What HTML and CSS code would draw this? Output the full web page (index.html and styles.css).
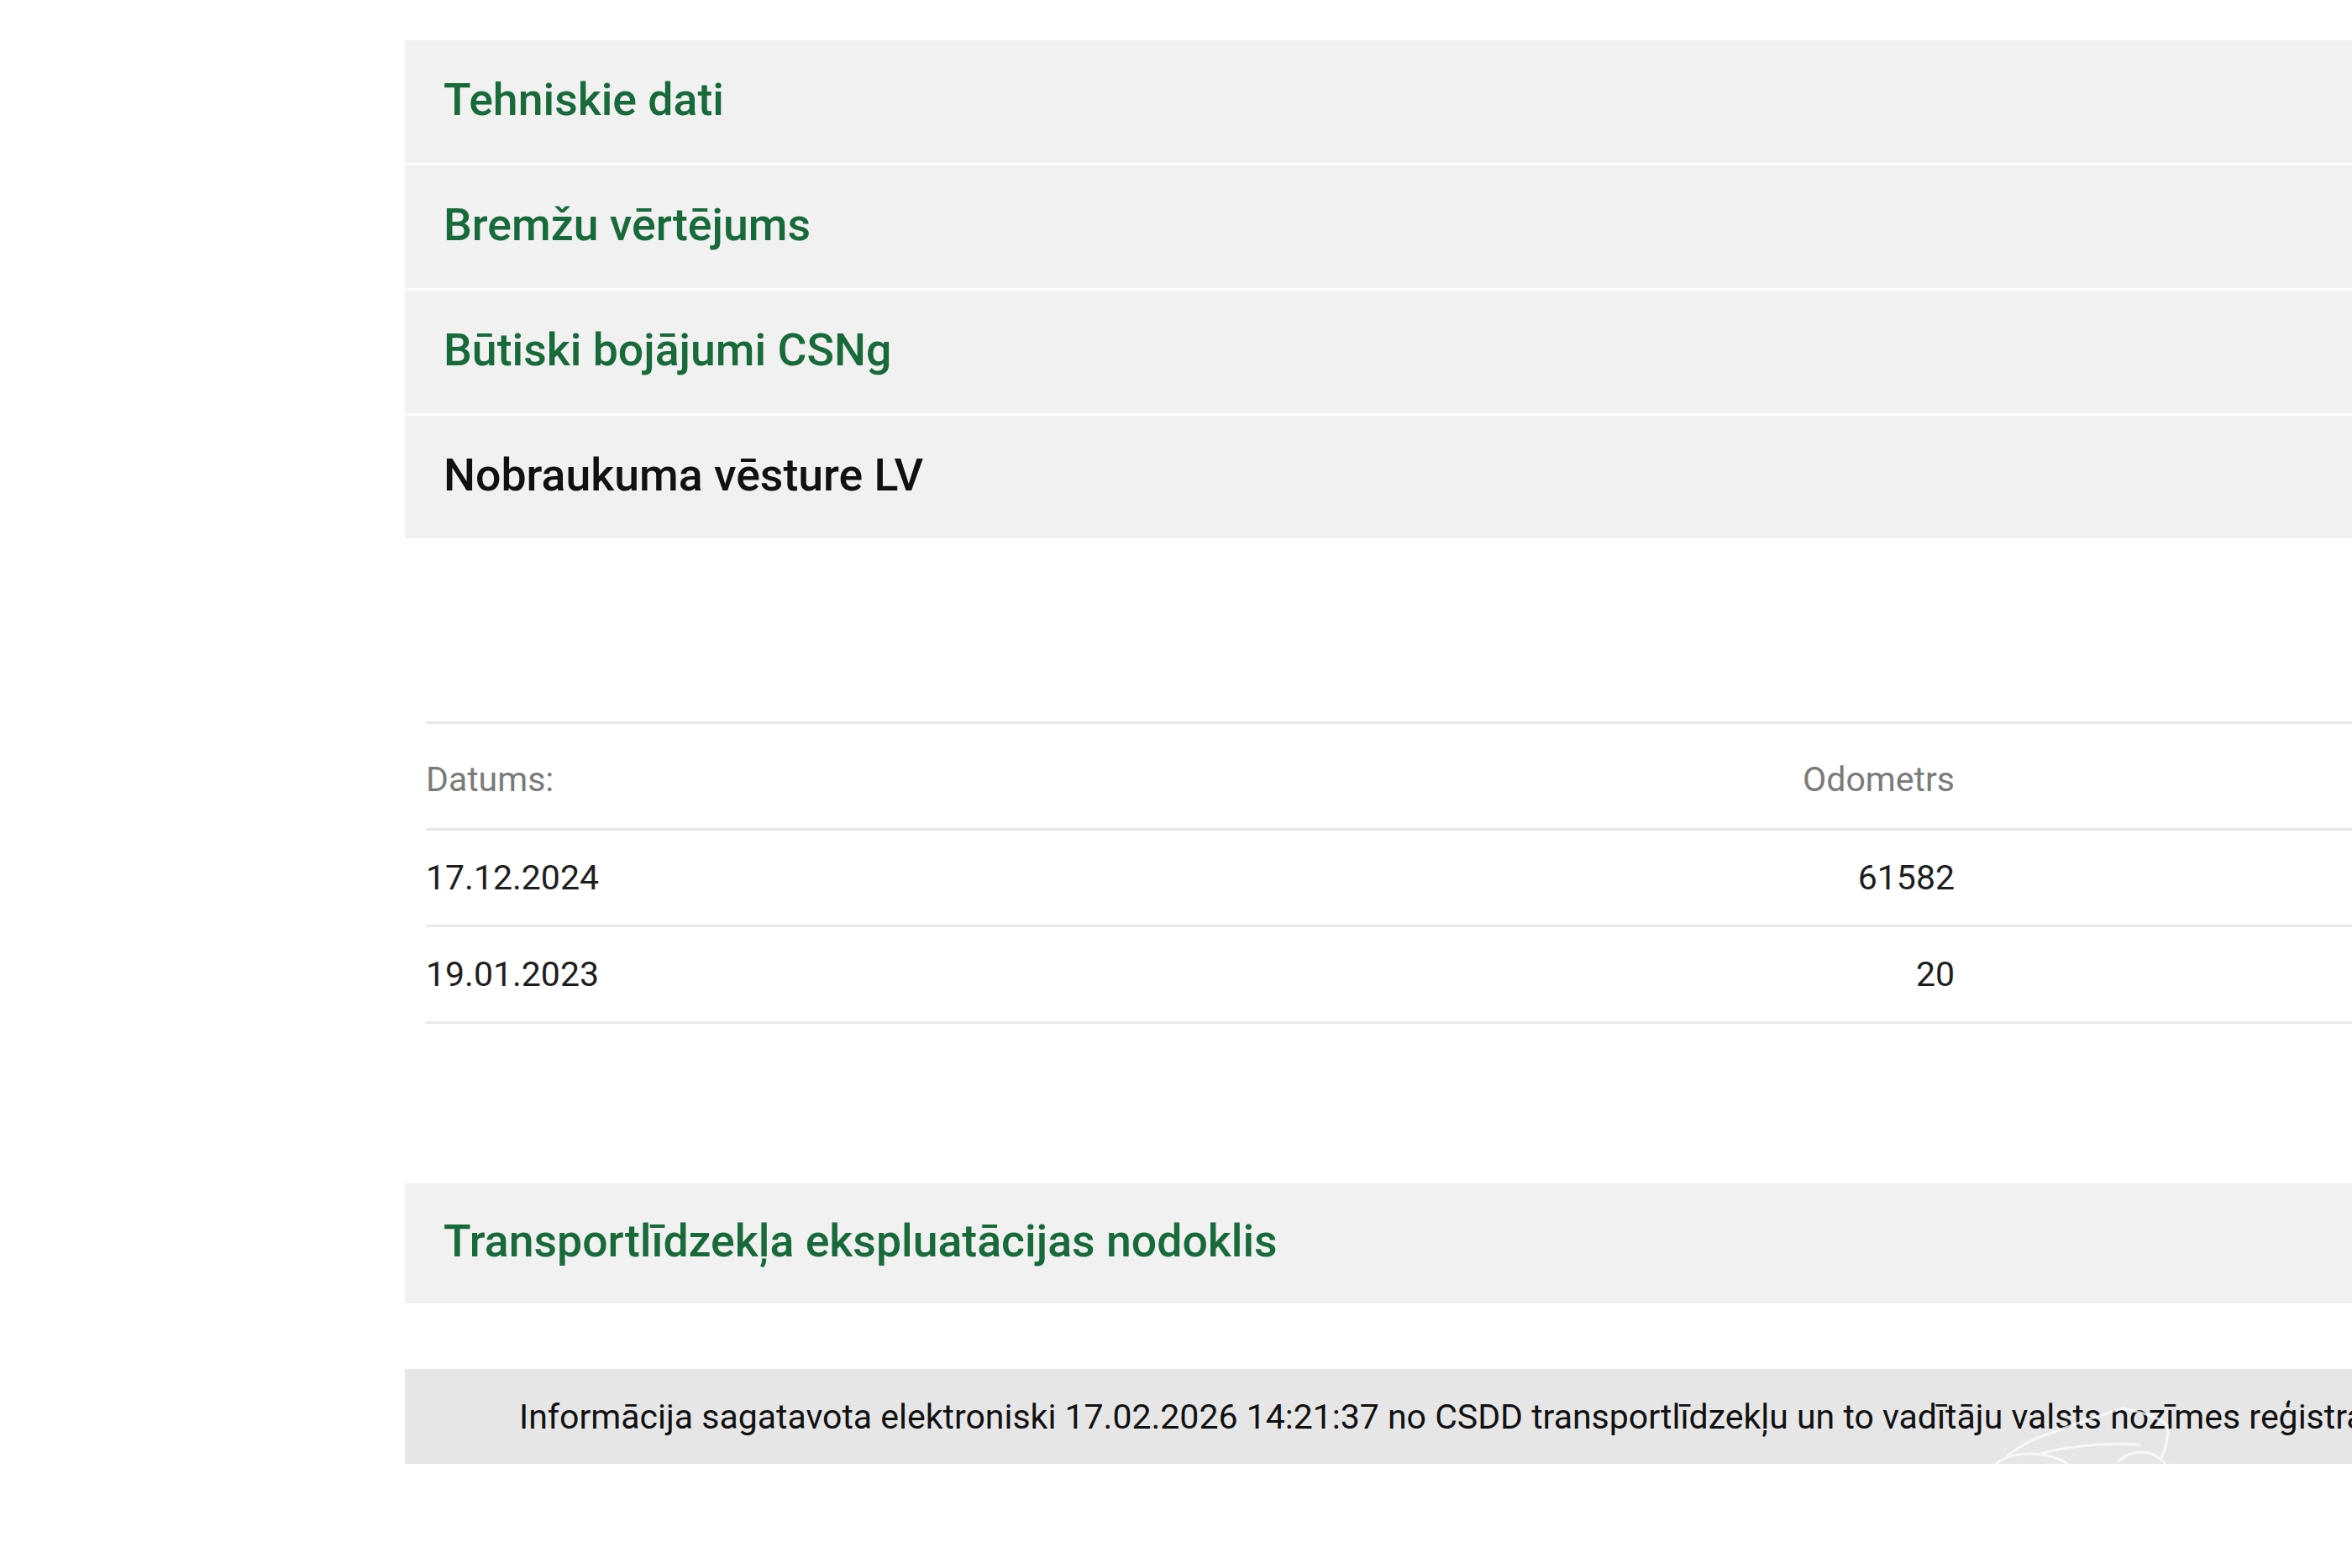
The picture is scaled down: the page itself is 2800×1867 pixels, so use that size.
FILE: index.html
```html
<!DOCTYPE html>
<html lang="lv">
<head>
<meta charset="utf-8">
<title>Nobraukuma vēsture</title>
<link rel="stylesheet" href="styles.css">
</head>
<body>
<main class="page">
  <section class="accordion">
    <div class="acc-item"><span class="acc-title">Tehniskie dati</span></div>
    <div class="acc-item"><span class="acc-title">Bremžu vērtējums</span></div>
    <div class="acc-item"><span class="acc-title">Būtiski bojājumi CSNg</span></div>
    <div class="acc-item active"><span class="acc-title">Nobraukuma vēsture LV</span></div>
  </section>

  <section class="history">
    <div class="hist-row head">
      <span class="c-date">Datums:</span>
      <span class="c-odo">Odometrs</span>
      <span class="c-rest"></span>
    </div>
    <div class="hist-row">
      <span class="c-date">17.12.2024</span>
      <span class="c-odo">61582</span>
      <span class="c-rest"></span>
    </div>
    <div class="hist-row">
      <span class="c-date">19.01.2023</span>
      <span class="c-odo">20</span>
      <span class="c-rest"></span>
    </div>
  </section>

  <section class="accordion tax">
    <div class="acc-item"><span class="acc-title">Transportlīdzekļa ekspluatācijas nodoklis</span></div>
  </section>

  <footer class="info">
    <span class="info-text">Informācija sagatavota elektroniski 17.02.2026 14:21:37 no CSDD transportlīdzekļu un to vadītāju valsts nozīmes reģistra</span>
    <svg class="watermark" viewBox="0 0 220 75" aria-hidden="true">
      <g fill="none" stroke="#ffffff" stroke-width="3" stroke-linecap="round">
        <path d="M18 63 C35 50 50 42 68 37 C100 25 130 14 155 7"/>
        <path d="M155 7 C180 12 200 18 208 27 C210 40 206 55 201 67"/>
        <path d="M5 72 C20 60 60 55 88 72"/>
        <path d="M150 70 C165 55 190 55 205 72"/>
        <path d="M60 60 C100 50 140 48 175 50"/>
      </g>
    </svg>
  </footer>
</main>
</body>
</html>
```

FILE: styles.css
```css
html, body {
  margin: 0;
  padding: 0;
  background: #ffffff;
}

body {
  font-family: Roboto, "Liberation Sans", Arial, sans-serif;
  color: #1a1a1a;
  overflow: hidden;
}

.page {
  padding: 48px 0 0 482px;
  width: 2400px;
}

.accordion {
  display: flex;
  flex-direction: column;
  gap: 3px;
}

.acc-item {
  box-sizing: border-box;
  height: 146px;
  background: #f1f1f1;
  display: flex;
  align-items: center;
  padding: 0 0 6px 46px;
}

.acc-title {
  font-size: 53.6px;
  font-weight: 500;
  color: #196a3b;
}

.acc-item.active .acc-title {
  color: #111111;
}

.history {
  margin: 218px 0 0 25px;
  border-top: 3px solid #e8e8e8;
}

.hist-row {
  display: grid;
  grid-template-columns: 300px 1520px 1fr;
  align-items: center;
  box-sizing: border-box;
  height: 115px;
  border-bottom: 3px solid #e8e8e8;
  font-size: 41px;
  color: #1e1e1e;
}

.hist-row.head {
  height: 127px;
  padding-top: 8px;
  color: #7a7a7a;
}

.c-odo {
  text-align: right;
}

.tax {
  margin-top: 190px;
}

.tax .acc-item {
  height: 143px;
}

.info {
  position: relative;
  margin-top: 78px;
  height: 113px;
  background: #e6e6e6;
  display: flex;
  align-items: center;
  padding-left: 136px;
  white-space: nowrap;
}

.info-text {
  font-size: 41px;
  color: #111111;
}

.watermark {
  position: absolute;
  left: 1890px;
  top: 40px;
  width: 220px;
  height: 75px;
  opacity: 0.75;
}
```
